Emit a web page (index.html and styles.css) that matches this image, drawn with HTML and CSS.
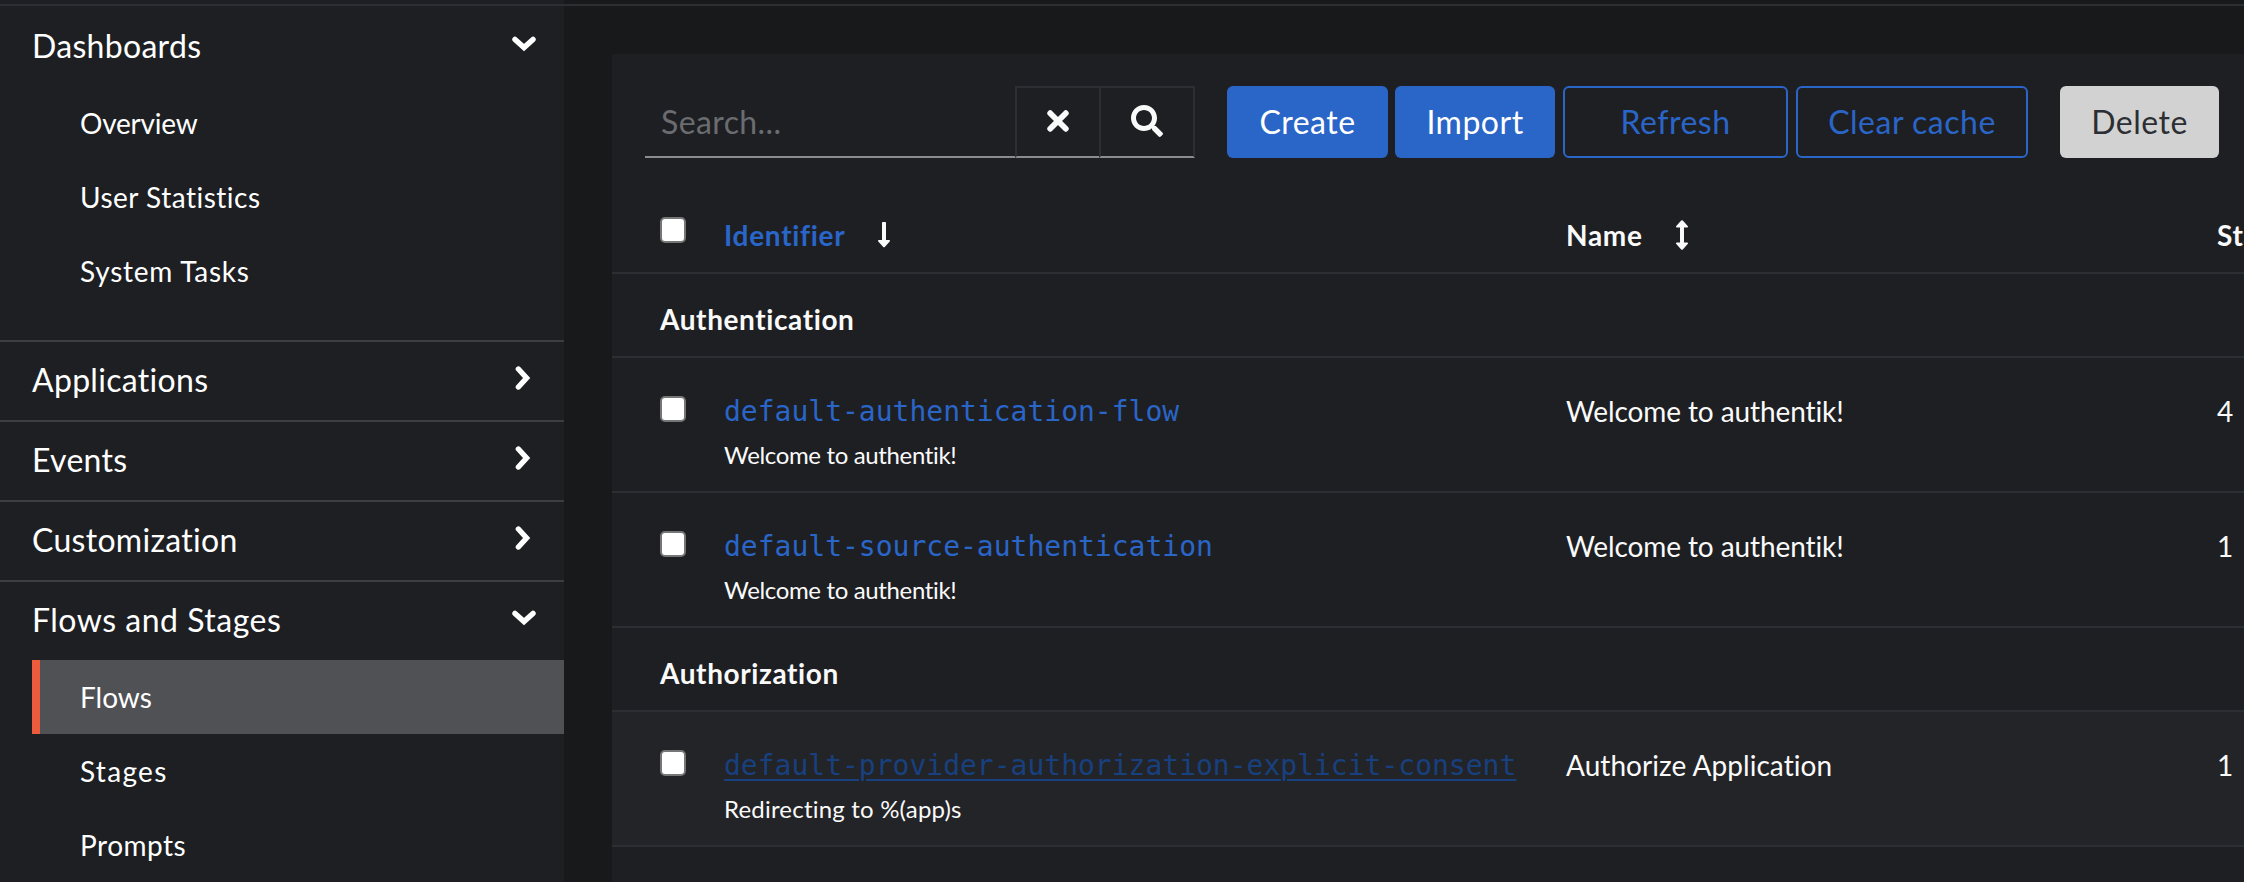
FILE: index.html
```html
<!DOCTYPE html>
<html lang="en">
<head>
<meta charset="utf-8">
<title>Flows</title>
<link rel="stylesheet" href="styles.css">
</head>
<body>
<svg class="sprite" width="0" height="0">
  <symbol id="down" viewBox="0 0 24 16"><path d="M3 3.400 12 11.600 21 3.400" fill="none" stroke="currentColor" stroke-width="5.400" stroke-linecap="round"/></symbol>
  <symbol id="right" viewBox="0 0 16 24"><path d="M3.400 3 11.600 12 3.400 21" fill="none" stroke="currentColor" stroke-width="5.400" stroke-linecap="round"/></symbol>
  <symbol id="times" viewBox="0 0 22 22"><path d="M3.200 3.200 18.800 18.800M18.800 3.200 3.200 18.800" fill="none" stroke="currentColor" stroke-width="5.800" stroke-linecap="round"/></symbol>
  <symbol id="search" viewBox="0 0 512 512"><path fill="currentColor" d="M505 442.700L405.300 343c-4.500-4.500-10.600-7-17-7H372c27.600-35.300 44-79.700 44-128C416 93.100 322.900 0 208 0S0 93.100 0 208s93.100 208 208 208c48.300 0 92.700-16.400 128-44v16.300c0 6.400 2.500 12.500 7 17l99.700 99.700c9.400 9.400 24.600 9.400 33.900 0l28.300-28.300c9.400-9.400 9.400-24.600.1-34zM208 336c-70.700 0-128-57.200-128-128 0-70.700 57.200-128 128-128 70.700 0 128 57.200 128 128 0 70.700-57.200 128-128 128z"/></symbol>
  <symbol id="arrow-down" viewBox="0 0 12 26"><path fill="currentColor" d="M4 .8Q4 0 4.800 0H7.200Q8 0 8 .8V18H11.200Q12.600 18.200 11.700 19.400L6.800 24.900Q6 25.700 5.200 24.900L.3 19.400Q-.6 18.200.8 18H4Z"/></symbol>
  <symbol id="arrows" viewBox="0 0 12 30"><path fill="currentColor" d="M4 22.500V7.500H.8Q-.6 7.300.3 6.100L5.200.6Q6-.2 6.800.6L11.700 6.100Q12.600 7.300 11.200 7.500H8V22.500H11.200Q12.600 22.700 11.700 23.900L6.800 29.400Q6 30.200 5.200 29.400L.3 23.900Q-.6 22.700.8 22.500Z"/></symbol>
</svg>
<div class="topbar"></div>
<div class="page">
  <nav class="sidebar">
    <section class="group open">
      <div class="heading"><span>Dashboards</span><svg class="chev-down"><use href="#down"/></svg></div>
      <a class="link tight">Overview</a>
      <a class="link medium">User Statistics</a>
      <a class="link loose">System Tasks</a>
    </section>
    <section class="group"><div class="heading"><span>Applications</span><svg class="chev-right"><use href="#right"/></svg></div></section>
    <section class="group"><div class="heading"><span>Events</span><svg class="chev-right"><use href="#right"/></svg></div></section>
    <section class="group"><div class="heading"><span>Customization</span><svg class="chev-right"><use href="#right"/></svg></div></section>
    <section class="group">
      <div class="heading"><span class="loose">Flows and Stages</span><svg class="chev-down"><use href="#down"/></svg></div>
      <a class="link active">Flows</a>
      <a class="link wide">Stages</a>
      <a class="link medium">Prompts</a>
    </section>
  </nav>
  <main class="main">
    <div class="card">
      <div class="toolbar">
        <div class="search">
          <div class="field">Search...</div>
          <button class="icon-btn clear"><svg class="times"><use href="#times"/></svg></button>
          <button class="icon-btn find"><svg class="glass"><use href="#search"/></svg></button>
        </div>
        <div class="actions">
          <button class="btn primary create">Create</button>
          <button class="btn primary import">Import</button>
          <button class="btn outline refresh">Refresh</button>
          <button class="btn outline cache">Clear cache</button>
          <button class="btn disabled delete">Delete</button>
        </div>
      </div>
      <div class="row head">
        <input type="checkbox" class="check">
        <div class="th sorted"><span>Identifier</span><svg class="arrow-down"><use href="#arrow-down"/></svg></div>
        <div class="th"><span>Name</span><svg class="arrows"><use href="#arrows"/></svg></div>
        <div class="th"><span>Stages</span></div>
      </div>
      <div class="category">Authentication</div>
      <div class="row">
        <input type="checkbox" class="check">
        <div><a class="code">default-authentication-flow</a><small class="sub">Welcome to authentik!</small></div>
        <div class="cell">Welcome to authentik!</div>
        <div class="cell">4</div>
      </div>
      <div class="row">
        <input type="checkbox" class="check">
        <div><a class="code">default-source-authentication</a><small class="sub">Welcome to authentik!</small></div>
        <div class="cell">Welcome to authentik!</div>
        <div class="cell">1</div>
      </div>
      <div class="category">Authorization</div>
      <div class="row hover">
        <input type="checkbox" class="check">
        <div><a class="code">default-provider-authorization-explicit-consent</a><small class="sub plain">Redirecting to %(app)s</small></div>
        <div class="cell plain">Authorize Application</div>
        <div class="cell">1</div>
      </div>
    </div>
  </main>
</div>
</body>
</html>
```
FILE: styles.css
```css
* { box-sizing: border-box; }
body {
  margin: 0;
  height: 882px;
  overflow: hidden;
  background: #18191a;
  color: #fafafa;
  font-family: Lato, "Open Sans", sans-serif;
  font-size: 28px;
  font-variant-ligatures: none;
  display: flex;
  flex-direction: column;
}
.sprite { display: none; }
svg { flex: none; display: block; }
.topbar { flex: none; height: 6px; border-bottom: 2px solid #2b2e33; background: linear-gradient(90deg, #1e1f23 564px, #18191a 564px); }
.page { flex: 1; min-height: 0; display: flex; }

.sidebar { flex: none; width: 564px; background: #1e1f23; color: #fff; overflow: hidden; }
.group { border-bottom: 2px solid #3c3f42; }
.group.open { padding-bottom: 32px; }
.heading { height: 78px; display: flex; justify-content: space-between; padding: 18px 28px 0 32px; font-size: 32px; line-height: 40px; letter-spacing: .3px; }
.group.open .heading { height: 80px; padding-top: 20px; }
.chev-down { width: 24px; height: 16px; margin-top: 10px; }
.chev-right { width: 16px; height: 24px; margin: 6px 5px 0 0; }
.link { display: block; height: 74px; margin-left: 32px; padding: 17px 0 0 48px; line-height: 40px; letter-spacing: 0; }
.link.active { background: #505155; border-left: 8px solid #eb5b3c; padding-left: 40px; }
.link.tight { letter-spacing: -.2px; }
.link.medium { letter-spacing: .5px; }
.link.loose { letter-spacing: .75px; }
.link.wide { letter-spacing: 1.3px; }
.heading .loose { letter-spacing: .5px; }

.main { flex: 1; min-width: 0; padding: 48px 0 0 48px; overflow: hidden; display: flex; }
.card { flex: 1; min-width: 0; background: #1e1f23; overflow: hidden; }
.toolbar { display: flex; height: 134px; padding: 32px 24px 0 33px; gap: 32px; }
.search { display: flex; flex: none; height: 72px; width: 550px; }
.field { flex: 1; border-bottom: 2px solid #8a8d90; padding: 16px 0 0 16px; font-size: 32px; line-height: 40px; letter-spacing: .4px; color: #6a6c70; }
.icon-btn { border: 2px solid #2b2e33; border-bottom-color: #8a8d90; background: none; color: #fafafa; padding: 0; display: flex; justify-content: center; }
.clear { width: 84px; border-right: 0; }
.find { width: 96px; }
.times { width: 22px; height: 22px; margin-top: 22px; align-self: flex-start; }
.glass { width: 32px; height: 32px; margin-top: 17px; align-self: flex-start; }
.actions { display: flex; height: 72px; gap: 8px; }
.btn { font: inherit; font-size: 32px; line-height: 40px; letter-spacing: .5px; border: 0; border-radius: 6px; padding: 0; color: #fff; }
.create { width: 161px; margin-right: -1px; }
.import { width: 160px; }
.refresh { width: 225px; }
.cache { width: 232px; }
.delete { width: 159px; margin-left: 24px; }
.primary { background: #2a65c8; }
.outline { background: none; border: 2px solid #2a65c8; color: #2a65c8; }
.disabled { background: #d2d2d2; color: #2b2e33; }

.row { display: grid; grid-template-columns: 64px 842px 651px 90px; height: 135px; padding: 38px 0 0 48px; border-bottom: 2px solid #2b2e33; }
.row.head { height: 86px; padding-top: 29px; }
.row.hover { background: #232427; }
.check { appearance: none; width: 26px; height: 26px; margin: 0; background: #fff; border: 2px solid #767676; border-radius: 5px; }
.th { display: flex; align-items: flex-start; font-weight: 700; line-height: 36px; letter-spacing: .7px; }
.th.sorted span { color: #2a65c8; }
.arrow-down { width: 12px; height: 26px; margin: 5px 0 0 33px; }
.arrows { width: 12px; height: 30px; margin: 3px 0 0 33px; }
.category { height: 84px; padding: 27px 0 0 48px; font-weight: 700; line-height: 36px; letter-spacing: .6px; border-bottom: 2px solid #2b2e33; }
.code { display: block; font-family: "DejaVu Sans Mono", monospace; font-size: 28px; line-height: 36px; margin-top: -2px; color: #2a65c8; }
.hover .code { color: #18407f; text-decoration: underline; text-decoration-thickness: 2px; text-underline-offset: 4px; }
.sub { display: block; font-size: 24px; line-height: 36px; margin-top: 7px; letter-spacing: -.35px; }
.cell { line-height: 36px; margin-top: -3px; letter-spacing: -.1px; }
.sub.plain { letter-spacing: .2px; }
.cell.plain { letter-spacing: .05px; }
```
